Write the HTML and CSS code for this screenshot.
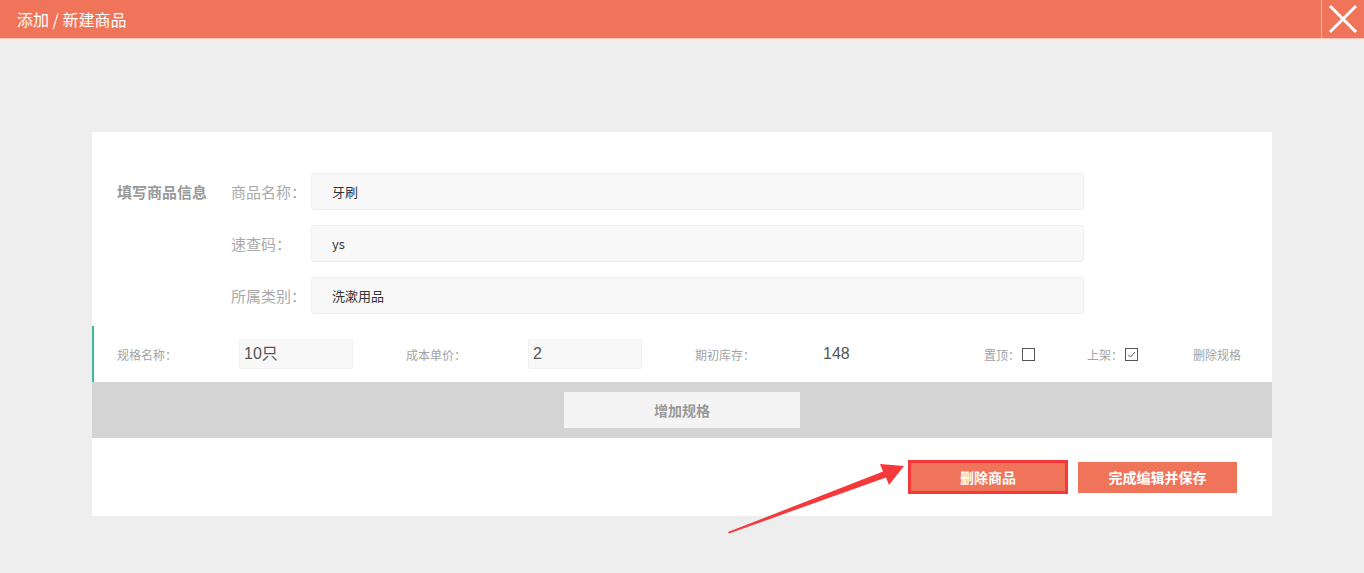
FILE: index.html
```html
<!DOCTYPE html>
<html lang="zh">
<head>
<meta charset="utf-8">
<title>添加 / 新建商品</title>
<link rel="stylesheet" href="styles.css">
</head>
<body>
<header class="topbar">
  <div class="title">添加 / 新建商品</div>
  <div class="close">
    <svg width="30" height="30" viewBox="0 0 30 30"><path d="M2 2 L28 28 M28 2 L2 28" stroke="#fff" stroke-width="3" fill="none"/></svg>
  </div>
</header>
<main class="card">
  <section class="info">
    <div class="section-title">填写商品信息</div>
    <div class="fields">
      <div class="field"><label>商品名称：</label><div class="input">牙刷</div></div>
      <div class="field"><label>速查码：</label><div class="input">ys</div></div>
      <div class="field"><label>所属类别：</label><div class="input">洗漱用品</div></div>
    </div>
  </section>
  <section class="spec">
    <span class="s-label w1">规格名称：</span>
    <div class="s-input">10只</div>
    <span class="s-label w1 ml">成本单价：</span>
    <div class="s-input">2</div>
    <span class="s-label w3 ml">期初库存：</span>
    <span class="s-value">148</span>
    <span class="s-check g1">置顶：<i class="box"></i></span>
    <span class="s-check g2">上架：<i class="box checked"><svg width="11" height="11" viewBox="0 0 11 11"><path d="M2 5.5 L4.5 8 L9 3" stroke="#555" stroke-width="1" fill="none"/></svg></i></span>
    <span class="s-label">删除规格</span>
  </section>
  <section class="addbar">
    <div class="add-btn">增加规格</div>
  </section>
  <section class="actions">
    <div class="btn btn-del">删除商品</div>
    <div class="btn btn-save">完成编辑并保存</div>
  </section>
</main>
<svg class="arrow" width="1364" height="573" viewBox="0 0 1364 573">
  <polygon points="728,532 883,471.5 880,464 904,466 889,485 886,477.5 729,533.5" fill="#f5393a"/>
</svg>
</body>
</html>
```
FILE: styles.css
```css
* { box-sizing: border-box; }
html, body { margin: 0; padding: 0; }
body {
  background: #eeeeee;
  font-family: "Noto Sans CJK SC", "Noto Sans", sans-serif;
  width: 1364px;
  height: 573px;
  overflow: hidden;
  position: relative;
}
.topbar {
  height: 39px;
  background: #ef7459;
  border-bottom: 1px solid #f6c3b6;
  display: flex;
  align-items: center;
  justify-content: space-between;
}
.title {
  color: #fff;
  font-size: 16px;
  padding-left: 17px;
  line-height: 38px;
}
.close {
  width: 43px;
  height: 38px;
  border-left: 1px solid #f8c0b2;
  display: flex;
  align-items: center;
  justify-content: center;
}
.card {
  margin: 93px 0 0 92px;
  width: 1180px;
  height: 384px;
  background: #fff;
  padding-top: 41px;
}
.info {
  display: flex;
  padding-left: 25px;
}
.section-title {
  width: 114px;
  font-size: 15px;
  font-weight: bold;
  color: #999;
  line-height: 37px;
}
.fields {
  display: flex;
  flex-direction: column;
  gap: 15px;
}
.field {
  display: flex;
  align-items: center;
}
.field label {
  width: 80px;
  font-size: 15px;
  color: #aaa;
}
.input {
  width: 773px;
  height: 37px;
  background: #f8f8f8;
  border: 1px solid #efefef;
  border-radius: 3px;
  padding-left: 20px;
  font-size: 13px;
  color: #333;
  line-height: 35px;
}
.spec {
  margin-top: 12px;
  height: 56px;
  border-left: 2px solid #3cb996;
  display: flex;
  align-items: center;
  padding-left: 23px;
}
.s-label {
  font-size: 12px;
  color: #a3a3a3;
  white-space: nowrap;
}
.w1 { width: 122px; }
.w3 { width: 128px; }
.ml { margin-left: 53px; }
.s-input {
  width: 114px;
  height: 30px;
  background: #f8f8f8;
  border: 1px solid #f0f0f0;
  border-radius: 2px;
  font-family: "Liberation Sans", "Noto Sans CJK SC", sans-serif;
  font-size: 16px;
  color: #555;
  line-height: 28px;
  padding-left: 4px;
}
.s-value {
  width: 161px;
  font-family: "Liberation Sans", sans-serif;
  font-size: 16px;
  color: #555;
}
.s-check {
  display: flex;
  align-items: center;
  font-size: 12px;
  color: #a3a3a3;
}
.g1 { width: 103px; }
.g2 { width: 106px; }
.box {
  display: inline-flex;
  align-items: center;
  justify-content: center;
  width: 13px;
  height: 13px;
  border: 1px solid #555;
  margin-left: 2px;
}
.addbar {
  height: 56px;
  background: #d4d4d4;
  display: flex;
  justify-content: center;
  align-items: center;
}
.add-btn {
  width: 236px;
  height: 36px;
  background: #f4f4f4;
  color: #999;
  font-size: 14px;
  font-weight: bold;
  display: flex;
  align-items: center;
  justify-content: center;
}
.actions {
  height: 78px;
  display: flex;
  justify-content: flex-end;
  align-items: center;
  padding-right: 35px;
  gap: 10px;
}
.btn {
  background: #ef7459;
  color: #fff;
  font-size: 14px;
  font-weight: bold;
  display: flex;
  align-items: center;
  justify-content: center;
}
.btn-del {
  width: 160px;
  height: 34px;
  border: 3px solid #f5393a;
}
.btn-save {
  width: 159px;
  height: 31px;
}
.arrow {
  position: absolute;
  left: 0;
  top: 0;
  pointer-events: none;
}
```
